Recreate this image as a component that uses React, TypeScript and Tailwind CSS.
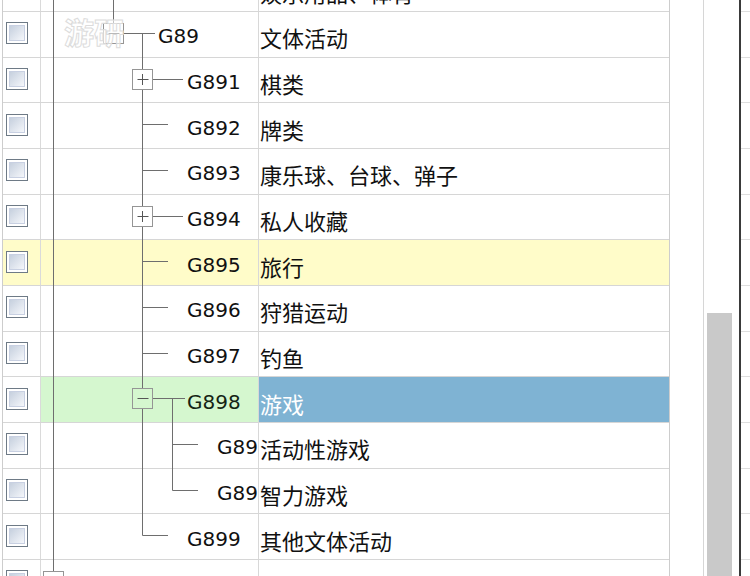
import React from 'react'

type Seg = [number, number, number, number]

type Row = {
  code: string
  name: string
  indent: number
  segs: Seg[]
  box?: { x: number; open: boolean }
  tone?: 'hover' | 'selected'
}

// x of each tree level's guide line, inside the tree cell
const R = 12.5
const L1 = 72.5
const L2 = 101.5
const L3 = 131.5
const M = 21.5
const B = 46

const full = (x: number): Seg => [x, 0, x, B]
const down = (x: number): Seg => [x, M, x, B]
const up = (x: number): Seg => [x, 0, x, M]

const rows: Row[] = [
  { code: 'G88', name: '娱乐用品、体育', indent: 117, segs: [full(R), full(L1), [L1, M, 114, M]] },
  { code: 'G89', name: '文体活动', indent: 117, segs: [full(R), [L1, 0, L1, 12], [L1, M, 114, M], down(L2)], box: { x: L1, open: true } },
  { code: 'G891', name: '棋类', indent: 146, segs: [full(R), full(L2), [L2, M, 142, M]], box: { x: L2, open: false } },
  { code: 'G892', name: '牌类', indent: 146, segs: [full(R), full(L2), [L2, M, 127, M]] },
  { code: 'G893', name: '康乐球、台球、弹子', indent: 146, segs: [full(R), full(L2), [L2, M, 127, M]] },
  { code: 'G894', name: '私人收藏', indent: 146, segs: [full(R), full(L2), [L2, M, 142, M]], box: { x: L2, open: false } },
  { code: 'G895', name: '旅行', indent: 146, segs: [full(R), full(L2), [L2, M, 127, M]], tone: 'hover' },
  { code: 'G896', name: '狩猎运动', indent: 146, segs: [full(R), full(L2), [L2, M, 127, M]] },
  { code: 'G897', name: '钓鱼', indent: 146, segs: [full(R), full(L2), [L2, M, 127, M]] },
  { code: 'G898', name: '游戏', indent: 146, segs: [full(R), full(L2), [L2, M, 144, M], down(L3)], box: { x: L2, open: true }, tone: 'selected' },
  { code: 'G89', name: '活动性游戏', indent: 176, segs: [full(R), full(L2), full(L3), [L3, M, 157, M]] },
  { code: 'G89', name: '智力游戏', indent: 176, segs: [full(R), full(L2), up(L3), [L3, M, 157, M]] },
  { code: 'G899', name: '其他文体活动', indent: 146, segs: [full(R), up(L2), [L2, M, 127, M]] },
  { code: '', name: '娱乐活动', indent: 60, segs: [[R, 0, R, 12], [R + 10, M, 40, M]], box: { x: R, open: false } },
]

function TreeLines ({ row, fill }: { row: Row, fill: string }) {
  return (
    <svg width={row.indent} height={44.67} className="shrink-0 overflow-visible" fill="none" stroke="#6e6e6e" strokeWidth={1}>
      {row.segs.map(([x1, y1, x2, y2], i) => (
        <line key={i} x1={x1} y1={y1} x2={x2} y2={y2} />
      ))}
      {row.box && (
        <g>
          <rect x={row.box.x - 10} y={11.5} width={20} height={20} fill={fill} stroke="#959595" />
          <line x1={row.box.x - 5} y1={M} x2={row.box.x + 6} y2={M} stroke="#555" />
          {!row.box.open && <line x1={row.box.x} y1={16} x2={row.box.x} y2={27} stroke="#555" />}
        </g>
      )}
    </svg>
  )
}

function Checkbox () {
  return (
    <div className="w-[22px] h-[22px] border border-[#6e7a86] p-[2px] bg-white -translate-y-[1px]">
      <div className="w-full h-full border border-[#c8d0e2] bg-linear-to-br from-[#c6d0de] to-[#f5f7fb]" />
    </div>
  )
}

function GridRow ({ row }: { row: Row }) {
  const hover = row.tone === 'hover'
  const selected = row.tone === 'selected'
  return (
    <div className={`h-[45.67px] flex border-b border-[#d6d6d6] ${hover ? 'bg-[#fffcc9]' : ''}`}>
      <div className="w-[38px] shrink-0 flex items-center pl-[3px] border-r border-[#dadada]">
        <Checkbox />
      </div>
      <div className={`w-[218px] shrink-0 flex items-center border-r border-[#d8d8d8] ${selected ? 'bg-[#d5f7cf]' : ''}`}>
        <TreeLines row={row} fill={selected ? '#d5f7cf' : hover ? '#fffcc9' : '#ffffff'} />
        <span className={`flex-1 min-w-0 overflow-hidden whitespace-nowrap font-['DejaVu_Sans'] text-[20px] leading-[28px] translate-y-[2px] ${selected ? 'text-[#142414]' : 'text-[#111]'}`}>
          {row.code}
        </span>
      </div>
      <div className={`flex-1 flex items-center pl-[1px] ${selected ? 'bg-[#7fb3d3] text-white' : 'text-[#111]'}`}>
        <span className="font-['Noto_Sans_CJK_SC'] text-[22px] leading-none translate-y-[3px] whitespace-nowrap">{row.name}</span>
      </div>
    </div>
  )
}

export default function App (): React.JSX.Element {
  return (
    <div className="relative w-[750px] h-[576px] overflow-hidden bg-white flex">
      <div className="ml-[2px] w-[668px] shrink-0 border-l border-r border-[#cdcdcd]">
        <div className="-mt-[33.67px]">
          {rows.map((row) => <GridRow key={row.code + row.name} row={row} />)}
        </div>
      </div>
      <div className="w-[33px] shrink-0" />
      <div className="w-[36px] shrink-0 border-l border-[#d6d6d6] flex flex-col pt-[313px] pl-[3px] pr-[7px]">
        <div className="flex-1 bg-[#c9c9c9]" />
      </div>
      <div className="w-[2px] shrink-0 bg-[#3a3a3a]" />
      <div className="flex-1">
        <div className="-mt-[33.67px]">
          {rows.map((row) => <div key={row.code + row.name} className="h-[45.67px] border-b border-[#dedede]" />)}
        </div>
      </div>
      <div className="absolute left-[64px] top-[16px] font-['Noto_Sans_CJK_SC'] text-[30px] leading-none font-bold text-white/60 [-webkit-text-stroke:1px_#dcdcdc]">
        游研
      </div>
    </div>
  )
}
